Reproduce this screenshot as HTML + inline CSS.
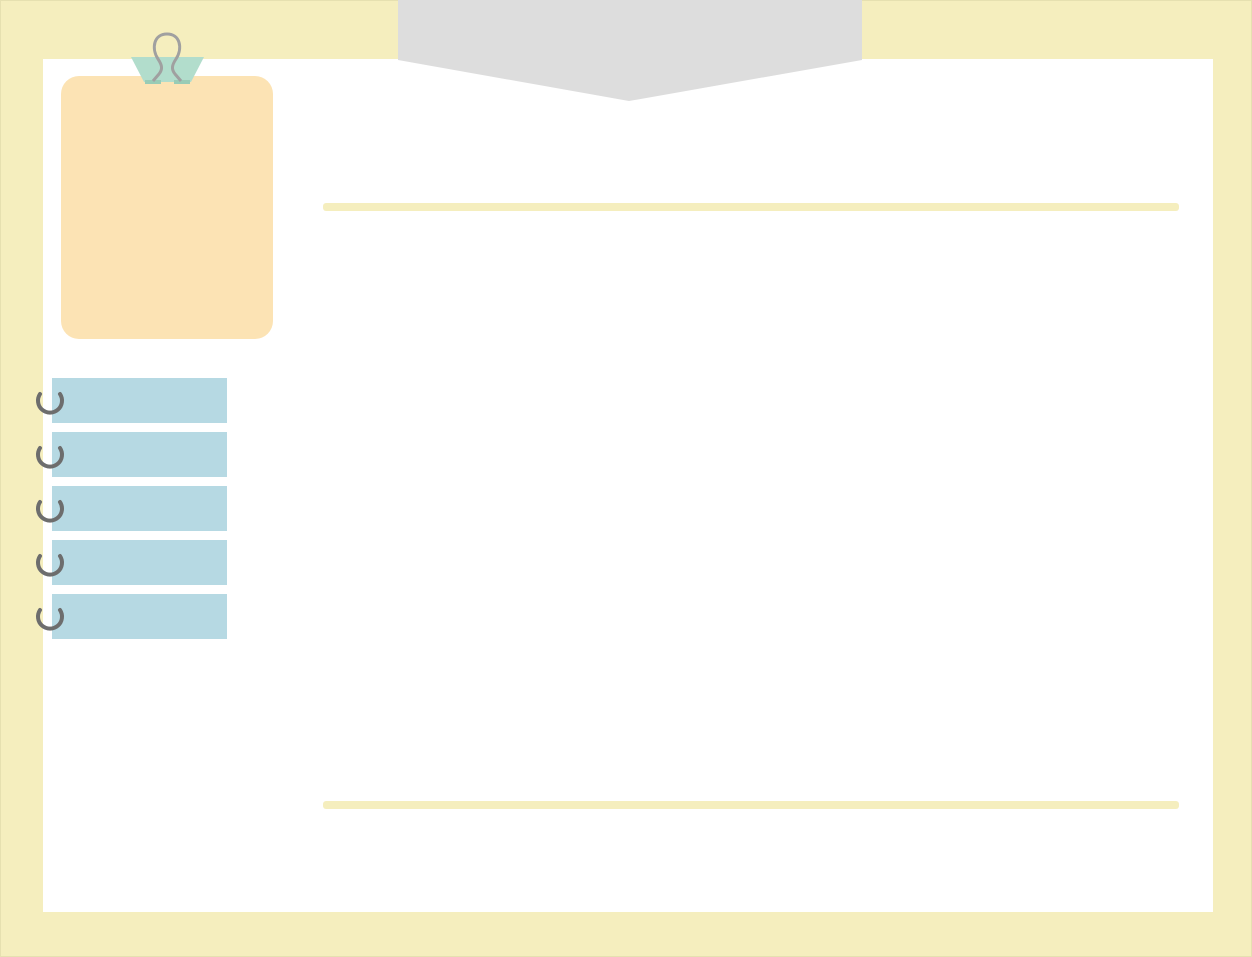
<!DOCTYPE html>
<html><head><style>html,body{margin:0;padding:0;width:1252px;height:957px;overflow:hidden;background:#fff}</style></head>
<body>
<svg width="1252" height="957" viewBox="0 0 1252 957" xmlns="http://www.w3.org/2000/svg">
<rect x="0" y="0" width="1252" height="957" fill="#f5eebe"/>
<rect x="0.5" y="0.5" width="1251" height="956" fill="none" stroke="#e6e0b0" stroke-width="1"/>
<rect x="43" y="59" width="1170" height="853" fill="#ffffff"/>
<polygon points="398,0 862,0 862,60 629,101 398,60" fill="#dddddd"/>
<rect x="61" y="76" width="212" height="263" rx="18" fill="#fce3b4"/>
<rect x="323" y="203" width="856" height="8" rx="3" fill="#f5eebe"/>
<rect x="323" y="801" width="856" height="8" rx="3" fill="#f5eebe"/>
<polygon points="131,57 204,57 191,82 144,82" fill="#b2ddcc"/>
<rect x="145" y="80" width="16" height="4" fill="#99ccb6"/>
<rect x="174" y="80" width="16" height="4" fill="#99ccb6"/>
<path d="M153,81 L159,74 C163,69 162,65 158,59 C151,48 154,34 167,34 C180,34 183,48 176,59 C172,65 171,69 175,74 L181,81" fill="none" stroke="#a0a0a0" stroke-width="3"/>
<g fill="#b6d9e3">
<rect x="52" y="378" width="175" height="45"/>
<rect x="52" y="432" width="175" height="45"/>
<rect x="52" y="486" width="175" height="45"/>
<rect x="52" y="540" width="175" height="45"/>
<rect x="52" y="594" width="175" height="45"/>
</g>
<g fill="none" stroke="#6d6d6d" stroke-width="4" stroke-linecap="round">
<path d="M40,394 A12,12 0 1 0 60,394"/>
<path d="M40,394 A12,12 0 1 0 60,394" transform="translate(0,54)"/>
<path d="M40,394 A12,12 0 1 0 60,394" transform="translate(0,108)"/>
<path d="M40,394 A12,12 0 1 0 60,394" transform="translate(0,162)"/>
<path d="M40,394 A12,12 0 1 0 60,394" transform="translate(0,216)"/>
</g>
</svg>
</body></html>
